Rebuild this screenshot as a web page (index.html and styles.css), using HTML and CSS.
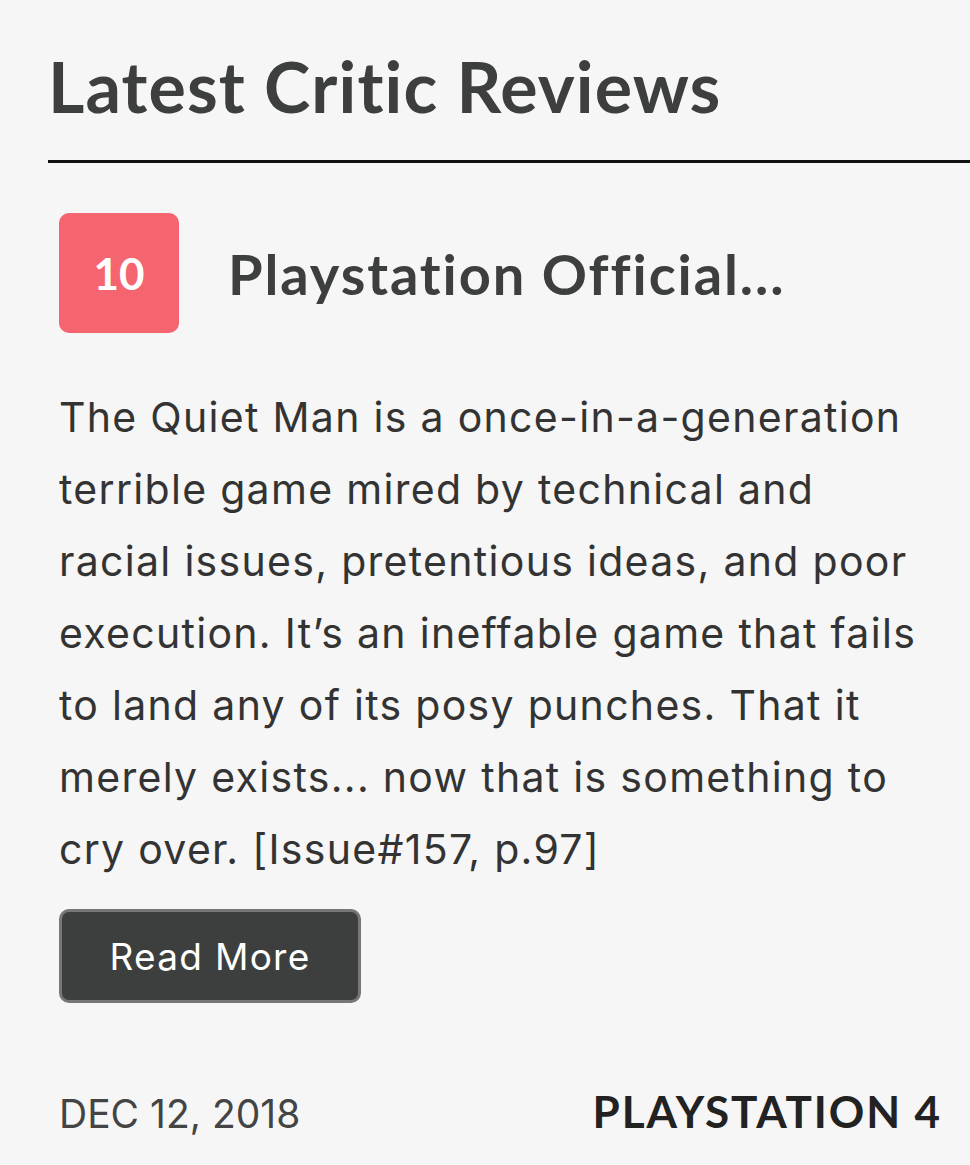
FILE: index.html
```html
<!DOCTYPE html>
<html>
<head>
<meta charset="utf-8">
<link rel="stylesheet" href="styles.css">
</head>
<body>
<section class="reviews">
  <h2 class="section-title">Latest Critic Reviews</h2>
  <article class="review">
    <div class="review-head">
      <div class="score">10</div>
      <h3 class="publication">Playstation Official...</h3>
    </div>
    <p class="quote">The Quiet Man is a once-in-a-generation terrible game mired by technical and racial issues, pretentious ideas, and poor execution. It’s an ineffable game that fails to land any of its posy punches. That it merely exists... now that is something to cry over. [Issue#157, p.97]</p>
    <a class="read-more" href="#">Read More</a>
    <div class="review-foot">
      <span class="date">DEC 12, 2018</span>
      <span class="platform">PLAYSTATION 4</span>
    </div>
  </article>
</section>
</body>
</html>
```
FILE: styles.css
```css
html, body {
  margin: 0;
  padding: 0;
  background: #f5f6f5;
}
body {
  font-family: Inter, "Liberation Sans", sans-serif;
  color: #3d3f3e;
  width: 970px;
  overflow: hidden;
}
.reviews {
  padding: 38px 0 0 48px;
}
.section-title {
  margin: 0;
  font-family: Lato, "Liberation Sans", sans-serif;
  font-size: 70px;
  font-weight: 700;
  letter-spacing: 1.1px;
  line-height: 96px;
  padding-bottom: 26px;
  border-bottom: 3px solid #111;
  color: #3d3f3e;
}
.review {
  padding: 50px 30px 0 11px;
}
.review-head {
  display: flex;
  align-items: center;
  gap: 49px;
}
.score {
  width: 120px;
  height: 120px;
  flex: none;
  background: #f56570;
  border-radius: 10px;
  color: #fff;
  font-family: Lato, "Liberation Sans", sans-serif;
  font-size: 44px;
  font-weight: 700;
  display: flex;
  align-items: center;
  justify-content: center;
}
.publication {
  margin: 0;
  font-family: Lato, "Liberation Sans", sans-serif;
  font-size: 56px;
  font-weight: 700;
  letter-spacing: 1.9px;
  color: #3d3f3e;
}
.quote {
  margin: 48px 15px 0 0;
  font-size: 41px;
  letter-spacing: 1.3px;
  line-height: 72px;
  color: #333;
}
.read-more {
  display: inline-flex;
  align-items: center;
  justify-content: center;
  box-sizing: border-box;
  width: 302px;
  height: 94px;
  margin-top: 24px;
  background: #3d3f3e;
  border: 3px solid #777;
  border-radius: 10px;
  color: #fff;
  text-decoration: none;
  font-size: 37px;
  letter-spacing: 1.3px;
}
.review-foot {
  display: flex;
  justify-content: space-between;
  align-items: baseline;
  margin-top: 82px;
}
.date {
  font-size: 39px;
  color: #444;
}
.platform {
  font-family: Lato, "Liberation Sans", sans-serif;
  font-size: 44px;
  font-weight: 700;
  letter-spacing: 1.9px;
  margin-right: -2px;
  color: #222;
}
```
